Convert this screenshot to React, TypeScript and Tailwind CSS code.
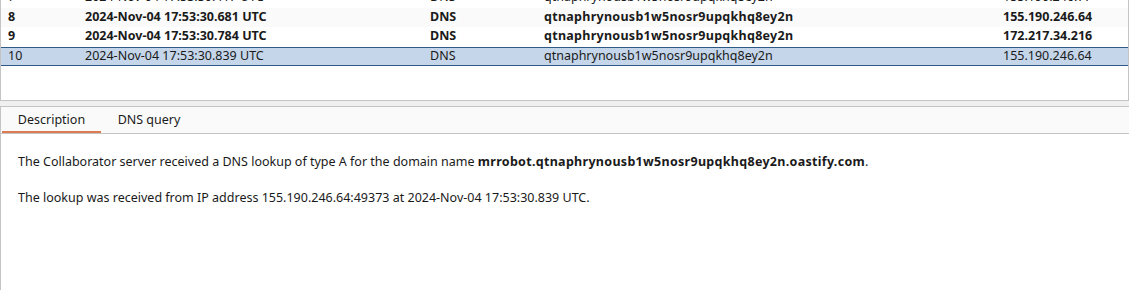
const rows = [
  { id: "7", time: "2024-Nov-04 17:53:30.417 UTC", type: "DNS", payload: "qtnaphrynousb1w5nosr9upqkhq8ey2n", ip: "155.190.246.77", bold: false, alt: false },
  { id: "8", time: "2024-Nov-04 17:53:30.681 UTC", type: "DNS", payload: "qtnaphrynousb1w5nosr9upqkhq8ey2n", ip: "155.190.246.64", bold: true, alt: true },
  { id: "9", time: "2024-Nov-04 17:53:30.784 UTC", type: "DNS", payload: "qtnaphrynousb1w5nosr9upqkhq8ey2n", ip: "172.217.34.216", bold: true, alt: false },
];

const Row = ({ r, selected }: { r: (typeof rows)[number]; selected?: boolean }) => (
  <div
    className={
      "flex h-[19.5px] shrink-0 items-center text-[12.5px] text-[#1a1a1a] " +
      (selected
        ? "border-y border-[#2f5a86] bg-[#c5d6ea]"
        : r.alt
          ? "bg-[#fafafa]"
          : "bg-white") +
      (r.bold ? " font-bold" : "")
    }
  >
    <div className="w-[84px] shrink-0 pl-[7px]">{r.id}</div>
    <div className="w-[345px] shrink-0">{r.time}</div>
    <div className="w-[114px] shrink-0">{r.type}</div>
    <div className={"w-[459px] shrink-0" + (r.bold ? " tracking-[0.28px]" : "")}>{r.payload}</div>
    <div className="flex-1">{r.ip}</div>
  </div>
);

export default function App() {
  return (
    <div
      className="flex h-[290px] w-[1129px] flex-col overflow-hidden bg-[#f0f0f0]"
      style={{ fontFamily: '"Noto Sans", "Open Sans", sans-serif' }}
    >
      {/* interactions table */}
      <div className="flex h-[101px] shrink-0 flex-col justify-end overflow-hidden border-x border-b border-[#c4c4c4] bg-white">
        <div className="flex flex-col pb-[34px]">
          {rows.map((r) => (
            <Row key={r.id} r={r} />
          ))}
          <Row
            r={{
              id: "10",
              time: "2024-Nov-04 17:53:30.839 UTC",
              type: "DNS",
              payload: "qtnaphrynousb1w5nosr9upqkhq8ey2n",
              ip: "155.190.246.64",
              bold: false,
              alt: false,
            }}
            selected
          />
        </div>
      </div>

      {/* details */}
      <div className="mt-[5px] flex flex-1 flex-col border-l border-t border-[#c4c4c4]">
        <div className="flex h-[26px] shrink-0 items-end bg-[#fafafa] text-[12.5px] text-[#1a1a1a]">
          <div className="ml-[1px] flex h-full w-[99px] items-center justify-center border-b-2 border-[#dd7a50] pt-[3px]">
            Description
          </div>
          <div className="flex h-full w-[96px] items-center justify-center border-b-2 border-transparent pt-[3px]">
            DNS query
          </div>
        </div>
        <div className="flex-1 border-t border-[#c4c4c4] bg-white px-[17px] pt-[19px] text-[12.5px] text-[#1a1a1a]">
          <p className="leading-[18px]">
            The Collaborator server received a DNS lookup of type A for the domain name{" "}
            <span className="font-bold tracking-[0.3px]">mrrobot.qtnaphrynousb1w5nosr9upqkhq8ey2n.oastify.com</span>.
          </p>
          <p className="mt-[18px] leading-[18px]">
            The lookup was received from IP address 155.190.246.64:49373 at 2024-Nov-04 17:53:30.839 UTC.
          </p>
        </div>
      </div>
    </div>
  );
}
